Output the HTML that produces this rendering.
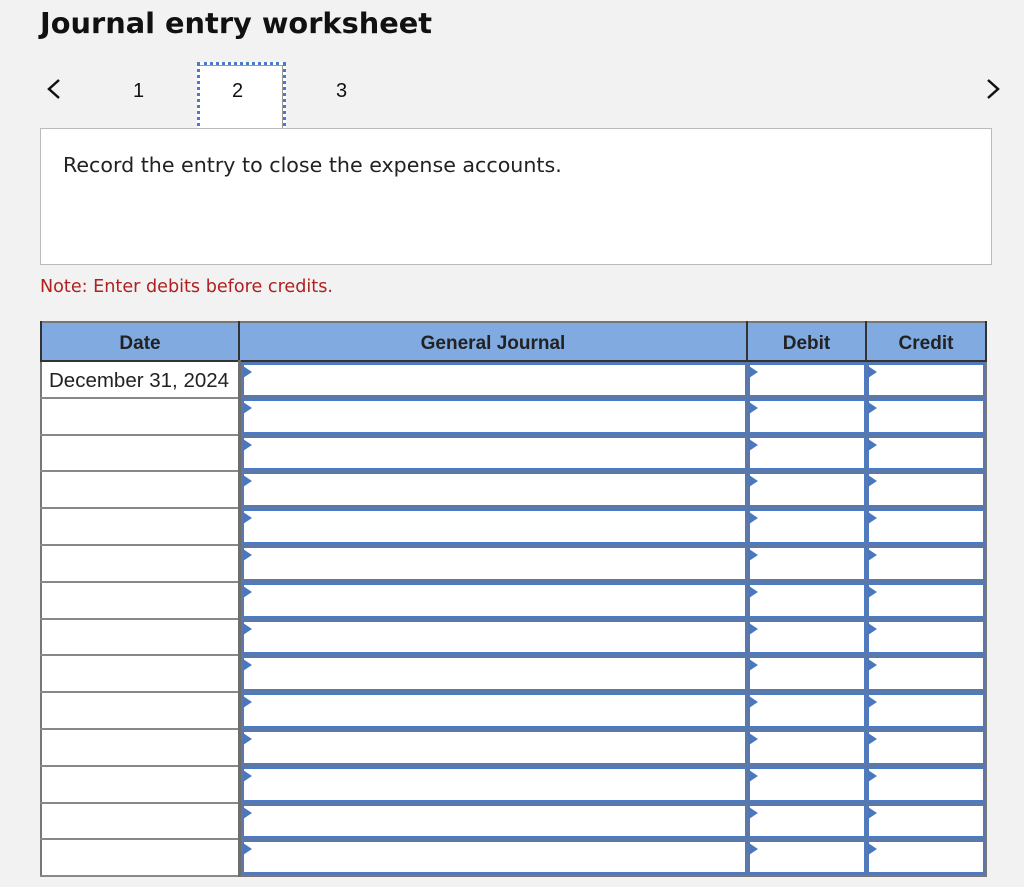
<!DOCTYPE html><html><head><style>
body{margin:0;width:1024px;height:887px;background:#f2f2f2;font-family:"Liberation Sans",Arial,sans-serif;position:relative;overflow:hidden}
.a{position:absolute}
h1{position:absolute;left:40px;top:6px;margin:0;font-family:"DejaVu Sans",sans-serif;font-size:28.8px;font-weight:bold;color:#111}
.tab{font-size:20px;color:#111}
table{position:absolute;left:40px;top:321px;border-collapse:collapse;table-layout:fixed;width:947px;border:2px solid #777}
th{background:#80aae0;height:39px;box-sizing:border-box;font-size:19px;font-weight:bold;color:#222;border:2px solid #333;border-top:none;padding:4px 0 0}
td{height:36.8px;padding:0;box-sizing:border-box}
td.d{background:#fff;border-bottom:2px solid #888;border-right:3px solid #6e6e6e;font-size:20.5px;color:#222;padding:4px 0 0 7px}
td.i{background:#5a78aa;padding:2px 1px 2px 2px;position:relative}
td.i div{background:#fff;height:100%;box-sizing:border-box;border:1px solid #4a7bc8;position:relative}
td.i div:before{content:"";position:absolute;left:-1px;top:1px;border-left:9px solid #4a78c0;border-top:6px solid transparent;border-bottom:6px solid transparent}
</style></head><body>
<h1>Journal entry worksheet</h1>
<svg class="a" style="left:44px;top:77px" width="20" height="26"><path d="M15 3 L5 12 L15 21" fill="none" stroke="#111" stroke-width="2.5"/></svg>
<svg class="a" style="left:984px;top:77px" width="20" height="26"><path d="M4 3 L14 12 L4 21" fill="none" stroke="#111" stroke-width="2.5"/></svg>
<div class="a tab" style="left:133px;top:80px">1</div>
<div class="a" style="left:197px;top:62px;width:83px;height:66px;background:#fff;border:3px dotted #4a7bc8;box-shadow:inset -1px 1px 0 #999"></div>
<div class="a tab" style="left:232px;top:80px">2</div>
<div class="a tab" style="left:336px;top:80px">3</div>
<div class="a" style="left:40px;top:128px;width:950px;height:135px;background:#fff;border:1px solid #bbb"></div>
<div class="a" style="left:63px;top:153px;font-family:'DejaVu Sans',sans-serif;font-size:20.6px;color:#222">Record the entry to close the expense accounts.</div>
<div class="a" style="left:40px;top:277px;font-family:'DejaVu Sans',sans-serif;font-size:17.6px;color:#b02020">Note: Enter debits before credits.</div>
<table><colgroup><col style="width:198px"><col style="width:508px"><col style="width:119px"><col style="width:120px"></colgroup>
<tr><th>Date</th><th>General Journal</th><th>Debit</th><th>Credit</th></tr>
<tr><td class="d">December 31, 2024</td><td class="i"><div></div></td><td class="i"><div></div></td><td class="i"><div></div></td></tr>
<tr><td class="d"></td><td class="i"><div></div></td><td class="i"><div></div></td><td class="i"><div></div></td></tr>
<tr><td class="d"></td><td class="i"><div></div></td><td class="i"><div></div></td><td class="i"><div></div></td></tr>
<tr><td class="d"></td><td class="i"><div></div></td><td class="i"><div></div></td><td class="i"><div></div></td></tr>
<tr><td class="d"></td><td class="i"><div></div></td><td class="i"><div></div></td><td class="i"><div></div></td></tr>
<tr><td class="d"></td><td class="i"><div></div></td><td class="i"><div></div></td><td class="i"><div></div></td></tr>
<tr><td class="d"></td><td class="i"><div></div></td><td class="i"><div></div></td><td class="i"><div></div></td></tr>
<tr><td class="d"></td><td class="i"><div></div></td><td class="i"><div></div></td><td class="i"><div></div></td></tr>
<tr><td class="d"></td><td class="i"><div></div></td><td class="i"><div></div></td><td class="i"><div></div></td></tr>
<tr><td class="d"></td><td class="i"><div></div></td><td class="i"><div></div></td><td class="i"><div></div></td></tr>
<tr><td class="d"></td><td class="i"><div></div></td><td class="i"><div></div></td><td class="i"><div></div></td></tr>
<tr><td class="d"></td><td class="i"><div></div></td><td class="i"><div></div></td><td class="i"><div></div></td></tr>
<tr><td class="d"></td><td class="i"><div></div></td><td class="i"><div></div></td><td class="i"><div></div></td></tr>
<tr><td class="d"></td><td class="i"><div></div></td><td class="i"><div></div></td><td class="i"><div></div></td></tr>
</table>
</body></html>
